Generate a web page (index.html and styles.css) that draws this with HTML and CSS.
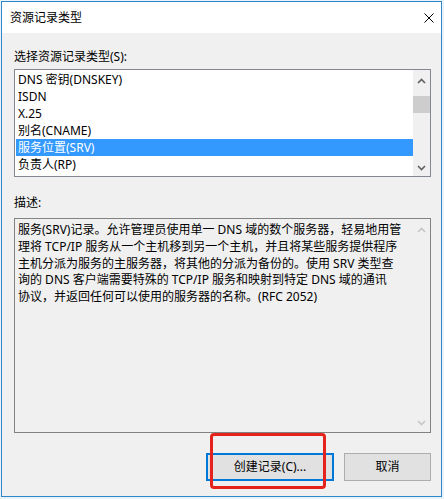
FILE: index.html
```html
<!DOCTYPE html>
<html lang="zh-CN">
<head>
<meta charset="utf-8">
<title>资源记录类型</title>
<link rel="stylesheet" href="styles.css">
</head>
<body>
<div class="window">
  <div class="titlebar">
    <span class="title">资源记录类型</span>
    <svg class="close" width="10" height="10" viewBox="0 0 10 10"><path d="M0.5 0.5 L9.5 9.5 M9.5 0.5 L0.5 9.5" stroke="#000" stroke-width="1" fill="none"/></svg>
  </div>
  <div class="content">
    <div class="label label-top">选择资源记录类型(S):</div>
    <div class="listbox">
      <ul class="items">
        <li>DNS 密钥(DNSKEY)</li>
        <li>ISDN</li>
        <li>X.25</li>
        <li>别名(CNAME)</li>
        <li class="selected">服务位置(SRV)</li>
        <li>负责人(RP)</li>
      </ul>
      <div class="scrollbar">
        <div class="arrow arrow-up"><svg width="9" height="6" viewBox="0 0 9 6"><path d="M1 5 L4.5 1.5 L8 5" stroke="#606060" stroke-width="1.6" fill="none"/></svg></div>
        <div class="track"><div class="thumb"></div></div>
        <div class="arrow arrow-down"><svg width="9" height="6" viewBox="0 0 9 6"><path d="M1 1 L4.5 4.5 L8 1" stroke="#606060" stroke-width="1.6" fill="none"/></svg></div>
      </div>
    </div>
    <div class="label label-desc">描述:</div>
    <div class="desc">
      <p class="desc-text">服务(SRV)记录。允许管理员使用单一 DNS 域的数个服务器，轻易地用管<br>理将 TCP/IP 服务从一个主机移到另一个主机，并且将某些服务提供程序<br>主机分派为服务的主服务器，将其他的分派为备份的。使用 SRV 类型查<br>询的 DNS 客户端需要特殊的 TCP/IP 服务和映射到特定 DNS 域的通讯<br>协议，并返回任何可以使用的服务器的名称。(RFC 2052)</p>
      <div class="scrollbar scrollbar-disabled">
        <div class="arrow arrow-up-d"><svg width="9" height="6" viewBox="0 0 9 6"><path d="M1 5 L4.5 1.5 L8 5" stroke="#c6c6c6" stroke-width="1.6" fill="none"/></svg></div>
        <div class="track"></div>
        <div class="arrow arrow-down-d"><svg width="9" height="6" viewBox="0 0 9 6"><path d="M1 1 L4.5 4.5 L8 1" stroke="#c6c6c6" stroke-width="1.6" fill="none"/></svg></div>
      </div>
    </div>
    <div class="buttons">
      <button class="btn btn-default">创建记录(C)...</button>
      <button class="btn btn-cancel">取消</button>
      <div class="annotation"></div>
    </div>
  </div>
</div>
</body>
</html>
```

FILE: styles.css
```css
* { box-sizing: border-box; }
html, body { margin: 0; padding: 0; }
body {
  width: 444px;
  height: 499px;
  background: #e8f2fa;
  font-family: "Noto Sans", "Noto Sans CJK SC", sans-serif;
  font-size: 12px;
  color: #000;
  padding: 1px 0 0 1px;
  overflow: hidden;
}
.window {
  width: 441px;
  height: 496px;
  border: 1px solid #2f86c9;
  background: #f0f0f0;
  display: flex;
  flex-direction: column;
}
.titlebar {
  height: 31px;
  background: #fff;
  display: flex;
  align-items: center;
  justify-content: space-between;
  padding-left: 8px;
  padding-right: 7px;
  flex: none;
}
.title { line-height: 16px; }
.close { display: block; }
.content {
  flex: 1;
  padding: 16px 10px 0 12px;
  display: flex;
  flex-direction: column;
}
.label { line-height: 16px; height: 16px; }
.label-top { margin-bottom: 4px; }
.label-desc { margin-top: 18px; margin-bottom: 7px; }
.listbox {
  height: 108px;
  border: 1px solid #828790;
  background: #fff;
  display: flex;
}
.items {
  list-style: none;
  margin: 0;
  padding: 1px 0 0 1px;
  flex: 1;
}
.items li {
  height: 17px;
  line-height: 17px;
  padding-left: 2px;
  white-space: nowrap;
}
.items li.selected { background: #3399ff; color: #fff; }
.scrollbar {
  width: 17px;
  background: #f0f0f0;
  display: flex;
  flex-direction: column;
  flex: none;
}
.arrow { display: flex; justify-content: center; align-items: center; flex: none; }
.arrow svg { display: block; }
.arrow-up { height: 20px; padding-top: 2px; }
.arrow-down { height: 17px; }
.track { flex: 1; }
.thumb { margin-top: 6px; height: 17px; background: #cdcdcd; }
.desc {
  height: 215px;
  border: 1px solid #828282;
  background: #f0f0f0;
  display: flex;
}
.desc-text {
  flex: 1;
  margin: 0;
  padding: 3px 0 0 3px;
  line-height: 16.75px;
  white-space: nowrap;
}
.arrow-up-d { height: 21px; padding-top: 1px; }
.arrow-down-d { height: 17px; padding-bottom: 2px; }
.buttons {
  position: relative;
  margin-top: 20px;
  display: flex;
  justify-content: flex-end;
  gap: 10px;
}
.btn {
  font: inherit;
  color: #000;
  height: 28px;
  background: #e1e1e1;
  border: 1px solid #adadad;
  padding: 0;
  line-height: 16px;
}
.btn-default { width: 128px; border: 2px solid #0078d7; }
.btn-cancel { width: 87px; }
.annotation {
  position: absolute;
  left: 196px;
  top: -20px;
  width: 116px;
  height: 56px;
  border: 3px solid #e4231c;
  border-radius: 4px;
}
```
